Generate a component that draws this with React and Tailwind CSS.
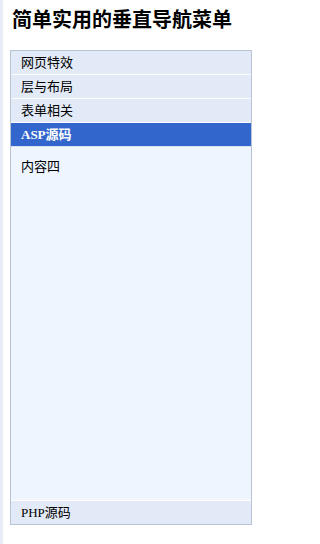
const MENU = [
  { id: 'effects', label: '网页特效' },
  { id: 'layout', label: '层与布局' },
  { id: 'form', label: '表单相关' },
  { id: 'asp', label: 'ASP源码', content: '内容四' },
];

const LAST = { id: 'php', label: 'PHP源码' };

const FONT = "font-['Liberation_Serif','Noto_Sans_CJK_SC',serif]";

function MenuItem({ label, active }) {
  return (
    <div
      className={
        active
          ? 'flex h-[24px] items-center border-b border-[#d9e4f5] bg-[#3366cc] pl-[10px] text-[13px] font-bold text-white'
          : 'flex h-[24px] items-center border-b border-white bg-[#e3eaf7] pl-[10px] text-[13px] text-black'
      }
    >
      {label}
    </div>
  );
}

export default function App() {
  const activeId = 'asp';
  const active = MENU.find((m) => m.id === activeId);

  return (
    <div className={`min-h-[544px] border-l-[3px] border-[#e6edf8] bg-white ${FONT}`}>
      <h1 className="pl-[9px] pt-[8px] text-[20px] font-bold leading-[24px] text-black">
        简单实用的垂直导航菜单
      </h1>

      <div className="ml-[7px] mt-[18px] w-[242px] border border-[#b8c3d5]">
        {MENU.map((m) => (
          <MenuItem key={m.id} label={m.label} active={m.id === activeId} />
        ))}

        <div className="h-[354px] border-b border-white bg-[#eef5ff] pl-[10px] pt-[10px] text-[13px] text-black">
          {active.content}
        </div>

        <div className="flex h-[23px] items-center bg-[#e3eaf7] pl-[10px] text-[13px] font-normal text-black">
          {LAST.label}
        </div>
      </div>
    </div>
  );
}
